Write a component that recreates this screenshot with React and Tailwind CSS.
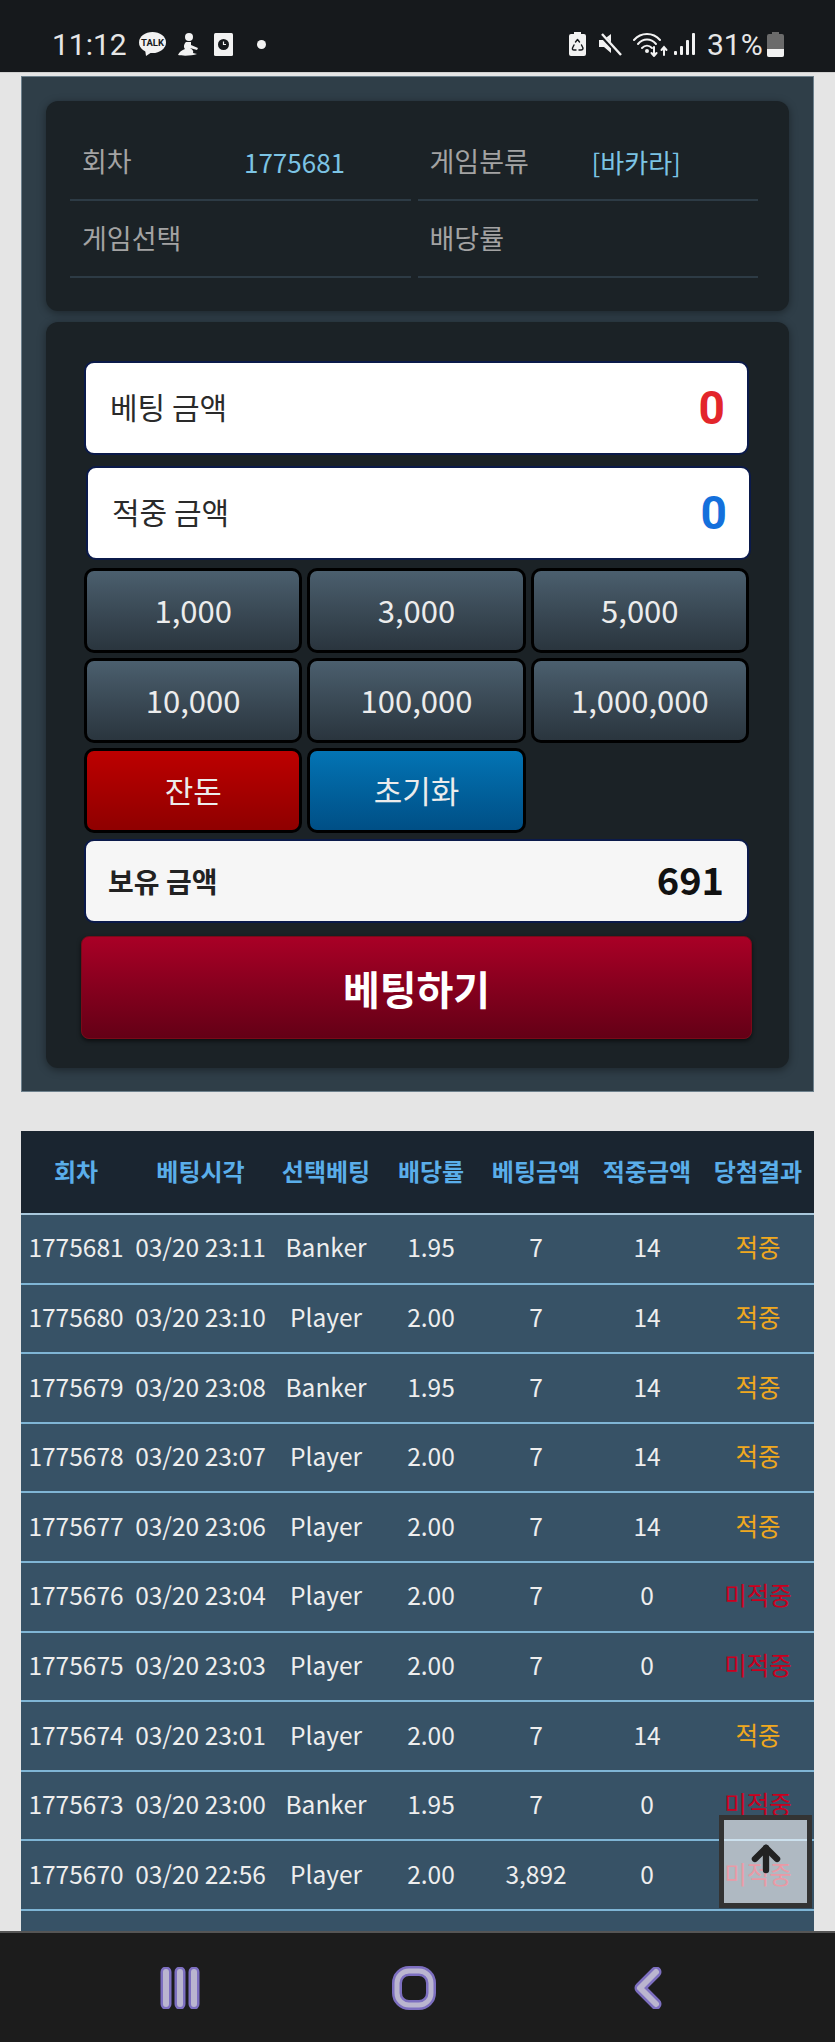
import { ArrowUp } from "lucide-react";

const rows = [
  ["1775681", "03/20 23:11", "Banker", "1.95", "7", "14", "적중"],
  ["1775680", "03/20 23:10", "Player", "2.00", "7", "14", "적중"],
  ["1775679", "03/20 23:08", "Banker", "1.95", "7", "14", "적중"],
  ["1775678", "03/20 23:07", "Player", "2.00", "7", "14", "적중"],
  ["1775677", "03/20 23:06", "Player", "2.00", "7", "14", "적중"],
  ["1775676", "03/20 23:04", "Player", "2.00", "7", "0", "미적중"],
  ["1775675", "03/20 23:03", "Player", "2.00", "7", "0", "미적중"],
  ["1775674", "03/20 23:01", "Player", "2.00", "7", "14", "적중"],
  ["1775673", "03/20 23:00", "Banker", "1.95", "7", "0", "미적중"],
  ["1775670", "03/20 22:56", "Player", "2.00", "3,892", "0", "미적중"],
];

const headers = ["회차", "베팅시각", "선택베팅", "배당률", "베팅금액", "적중금액", "당첨결과"];

const cols = "grid grid-cols-[110px_139px_112px_98px_112px_110px_112px]";

function StatusBar() {
  return (
    <div className="h-[73px] shrink-0 flex items-center justify-between pl-[52px] pr-[51px] pt-[16px] bg-[#16191c] border-b border-[#d0d0d0] font-['Roboto',sans-serif] text-[30px] text-[#e6e6e6]">
      <div className="flex items-center">
        <span className="w-[87px]">11:12</span>
        <svg width="27" height="24" viewBox="0 0 27 24">
          <ellipse cx="13.5" cy="10.5" rx="13.5" ry="10.5" fill="#f2f2f2" />
          <path d="M6 17 L7 24 L13 20 Z" fill="#f2f2f2" />
          <text x="13.5" y="14" textAnchor="middle" fontSize="9.5" fontWeight="700" fill="#16191c" fontFamily="Roboto, sans-serif">TALK</text>
        </svg>
        <svg className="ml-[12px]" width="20" height="23" viewBox="0 0 20 23" fill="#f2f2f2">
          <circle cx="11" cy="4" r="4" />
          <path d="M8 9 C5 12 6 15 7 16 C4 17 1 19 0 22 C4 23 14 23 19 21 L15 20 C16 18 14 16 12 15 L19 17 L20 15 L13 12 L13 9 Z" />
        </svg>
        <svg className="ml-[16px]" width="19" height="23" viewBox="0 0 19 23">
          <rect width="19" height="23" rx="1.5" fill="#f2f2f2" />
          <circle cx="9.5" cy="11.5" r="5.5" fill="#16191c" />
          <path d="M9.5 8.5 V11.5 H12" stroke="#f2f2f2" strokeWidth="1.2" fill="none" />
        </svg>
        <span className="ml-[24px] w-[9px] h-[9px] rounded-full bg-[#f2f2f2]" />
      </div>
      <div className="flex items-center">
        <svg width="17" height="24" viewBox="0 0 17 24">
          <path d="M5 0 H12 V2 H15 Q17 2 17 4 V22 Q17 24 15 24 H2 Q0 24 0 22 V4 Q0 2 2 2 H5 Z" fill="#f2f2f2" />
          <path d="M6.5 10 L8.5 7.5 L10.5 10 M12.5 13 L14 16 Q14 18 12 18 H10 M7 18 H5 Q3 18 3.5 16 L5 13" stroke="#16191c" strokeWidth="1.4" fill="none" strokeLinecap="round" strokeLinejoin="round" />
        </svg>
        <svg className="ml-[13px]" width="23" height="23" viewBox="0 0 23 23">
          <path d="M0 7 H4 L12 1 V14 Z M0 7 V14 H5 L12 20 V14 Z" fill="#f2f2f2" />
          <path d="M2 2 L21 22" stroke="#16191c" strokeWidth="4" />
          <path d="M3 1 L22 22" stroke="#f2f2f2" strokeWidth="2.4" />
        </svg>
        <svg className="ml-[11px]" width="35" height="25" viewBox="0 0 35 25" fill="none" stroke="#f2f2f2" strokeWidth="2" strokeLinecap="round">
          <path d="M1 8 C8 0 20 0 27 8" />
          <path d="M5 12 C10 6 18 6 23 12" />
          <path d="M9 16 C12 13 16 13 19 16" />
          <circle cx="14" cy="19" r="1" fill="#f2f2f2" />
          <path d="M21 15 V24 M18.5 21 L21 24 L23.5 21" />
          <path d="M31 23 V15 M28.5 18 L31 15 L33.5 18" />
        </svg>
        <svg className="ml-[6px]" width="22" height="22" viewBox="0 0 22 22" fill="#f2f2f2">
          <rect x="0" y="18" width="3" height="4" rx="1" />
          <rect x="6" y="13" width="3" height="9" rx="1" />
          <rect x="12" y="7" width="3" height="15" rx="1" />
          <rect x="18" y="0" width="3" height="22" rx="1" />
        </svg>
        <span className="ml-[11px] w-[60px]">31%</span>
        <svg width="17" height="25" viewBox="0 0 17 25">
          <path d="M5 0 H12 V2 H15 Q17 2 17 4 V23 Q17 25 15 25 H2 Q0 25 0 23 V4 Q0 2 2 2 H5 Z" fill="#6b6b6b" />
          <path d="M0 17 H17 V23 Q17 25 15 25 H2 Q0 25 0 23 Z" fill="#f2f2f2" />
        </svg>
      </div>
    </div>
  );
}

function InfoCell({ label, value }) {
  return (
    <div className="h-[77px] flex items-center pl-[12px] pb-[1px] border-b-2 border-[#2d3b45] text-[27px]">
      <span className="w-[162px] text-[#a3a3a3]">{label}</span>
      <span className="text-[26px] text-[#7cc4e4]">{value}</span>
    </div>
  );
}

function AmountRow({ label, value, valueColor, className }) {
  return (
    <div className={`h-[94px] flex items-center justify-between pl-[24px] pr-[22px] bg-white rounded-[10px] border-2 border-[#0b1a4a] ${className}`}>
      <span className="text-[30px] text-[#2a2a2a] pb-[4px]">{label}</span>
      <span className={`font-['Roboto',sans-serif] font-bold text-[46px] ${valueColor}`}>{value}</span>
    </div>
  );
}

function ChipButton({ children, color }) {
  return (
    <button className={`h-[85px] rounded-[10px] border-[3px] border-black text-[31px] text-[#ececec] ${color}`}>
      {children}
    </button>
  );
}

function BottomNav() {
  return (
    <div className="h-[111px] shrink-0 flex items-center bg-[#1c1c1c] border-t-2 border-[#555]">
      <svg className="ml-[160px]" width="40" height="42" viewBox="0 0 40 42" fill="none" strokeLinecap="round">
        <path d="M6 5 V37 M20 5 V37 M34 5 V37" stroke="#7d6fc0" strokeWidth="11" />
        <path d="M6 5 V37 M20 5 V37 M34 5 V37" stroke="#bab5cf" strokeWidth="6" />
      </svg>
      <svg className="ml-[192px]" width="44" height="44" viewBox="0 0 44 44" fill="none">
        <rect x="5" y="5" width="34" height="34" rx="12" stroke="#7d6fc0" strokeWidth="10" />
        <rect x="5" y="5" width="34" height="34" rx="12" stroke="#bab5cf" strokeWidth="5" />
      </svg>
      <svg className="ml-[198px]" width="28" height="42" viewBox="0 0 28 42" fill="none" strokeLinecap="round" strokeLinejoin="round">
        <path d="M22 5 L6 21 L22 37" stroke="#7d6fc0" strokeWidth="11" />
        <path d="M22 5 L6 21 L22 37" stroke="#bab5cf" strokeWidth="6" />
      </svg>
    </div>
  );
}

export default function App() {
  return (
    <div className="w-[835px] h-[2042px] flex flex-col overflow-hidden bg-[#e5e5e5] font-['Noto_Sans_CJK_KR',sans-serif]">
      <StatusBar />

      <div className="relative flex-1 overflow-hidden px-[21px] pt-[3px]">
        {/* bet panel */}
        <div className="h-[1016px] px-[24px] pt-[24px] bg-[#2f3e48] border border-[#6d808c]">
          <div className="h-[210px] pl-[24px] pr-[31px] pt-[23px] bg-[#1b2226] rounded-[12px] shadow-[0_2px_8px_rgba(0,0,0,0.4)]">
            <div className="grid grid-cols-2 gap-x-[7px]">
              <InfoCell label="회차" value="1775681" />
              <InfoCell label="게임분류" value="[바카라]" />
              <InfoCell label="게임선택" />
              <InfoCell label="배당률" />
            </div>
          </div>

          <div className="h-[746px] mt-[11px] pl-[38px] pr-[40px] pt-[39px] bg-[#1b2226] rounded-[12px] shadow-[0_2px_8px_rgba(0,0,0,0.4)]">
            <AmountRow label="베팅 금액" value="0" valueColor="text-[#e3262b]" />
            <AmountRow label="적중 금액" value="0" valueColor="text-[#1470dc]" className="mt-[11px] ml-[2px] -mr-[2px]" />

            <div className="grid grid-cols-3 gap-x-[5px] gap-y-[5px] mt-[8px]">
              {["1,000", "3,000", "5,000", "10,000", "100,000", "1,000,000"].map((amount) => (
                <ChipButton key={amount} color="bg-gradient-to-b from-[#4b5f6e] to-[#2a353e]">
                  {amount}
                </ChipButton>
              ))}
              <ChipButton color="bg-gradient-to-b from-[#bd0000] to-[#8f0000]">잔돈</ChipButton>
              <ChipButton color="bg-gradient-to-b from-[#0374b4] to-[#004f86]">초기화</ChipButton>
            </div>

            <div className="h-[84px] mt-[6px] flex items-center justify-between pl-[22px] pr-[23px] bg-[#f6f6f6] rounded-[10px] border-2 border-[#0b1a4a]">
              <span className="text-[28px] font-bold text-[#222]">보유 금액</span>
              <span className="text-[38px] font-bold text-[#111] -mt-[6px]">691</span>
            </div>

            <button className="w-[671px] h-[103px] mt-[13px] -ml-[3px] rounded-[8px] border border-[#7a0a18] bg-gradient-to-b from-[#a90026] to-[#640016] text-[40px] font-bold text-white shadow-[0_2px_4px_rgba(0,0,0,0.6)]">
              베팅하기
            </button>
          </div>
        </div>

        {/* history table */}
        <div className="mt-[39px] text-[24.5px]">
          <div className={`${cols} h-[82px] items-center pb-[2px] bg-[#1a2530] text-[24px] font-bold text-[#5aaeea]`}>
            {headers.map((h) => (
              <span key={h} className="text-center">{h}</span>
            ))}
          </div>
          <div className="bg-[#375266] border-t-2 border-[#a9c8dc]">
            {rows.map((row) => (
              <div key={row[0]} className={`${cols} h-[69.6px] items-center pb-[2px] border-b-2 border-[#7fb5d5] text-[#eeeeee]`}>
                {row.map((cell, i) => (
                  <span
                    key={i}
                    className={
                      i === 6
                        ? `text-center ${cell === "적중" ? "text-[#f0a81e]" : "text-[#c8001e]"}`
                        : "text-center whitespace-nowrap"
                    }
                  >
                    {cell}
                  </span>
                ))}
              </div>
            ))}
            <div className="h-[40px]" />
          </div>
        </div>

        {/* scroll to top */}
        <button className="absolute right-[23px] bottom-[23px] w-[93px] h-[93px] flex items-center justify-center bg-white/60 border-[5px] border-[#333]">
          <ArrowUp size={38} strokeWidth={4} color="#222" className="-mt-[6px]" />
        </button>
      </div>

      <BottomNav />
    </div>
  );
}
